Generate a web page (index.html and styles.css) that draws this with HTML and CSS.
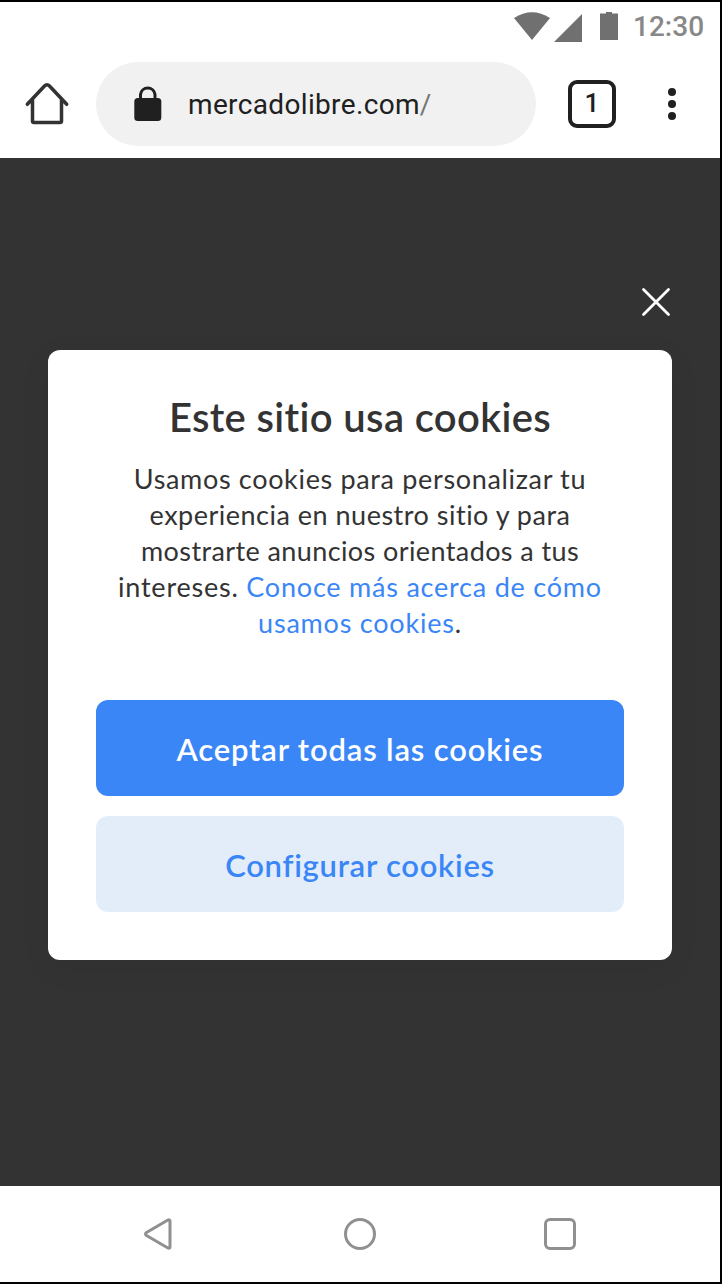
FILE: index.html
```html
<!DOCTYPE html>
<html lang="es">
<head>
<meta charset="utf-8">
<title>Mercado Libre</title>
<link rel="stylesheet" href="styles.css">
</head>
<body>
<div class="screen">
  <header class="status">
    <svg class="status-icons" width="106" height="34" viewBox="514 10 106 34" fill="#707070">
      <path d="M514 18Q532 6.500 550 18L532 40Z"/>
      <path d="M582 14V42H554Z"/>
      <path d="M600 13.500H606V12H612V13.500H618V40H600Z"/>
    </svg>
    <span class="clock">12:30</span>
  </header>
  <nav class="toolbar">
    <svg class="home" width="48" height="48" viewBox="24 80 48 48" fill="none" stroke="#333" stroke-width="3.500" stroke-linecap="round" stroke-linejoin="round">
      <path d="M27.300 104.300L44.500 86Q47 83.300 49.500 86L66.700 104.300M32.500 99.500V121Q32.500 122.500 34 122.500H60Q61.500 122.500 61.500 121V99.500"/>
    </svg>
    <div class="address">
      <svg class="lock" width="28" height="38" viewBox="134 85 28 38">
        <path d="M140.500 100V94.500A7.300 7.300 0 0 1 155 94.500V100" fill="none" stroke="#202020" stroke-width="3"/>
        <rect x="134.300" y="98" width="27" height="23" rx="3.500" fill="#202020"/>
      </svg>
      <span class="url">mercadolibre.com<span class="slash">/</span></span>
    </div>
    <div class="tabs">1</div>
    <div class="menu"><i></i><i></i><i></i></div>
  </nav>
  <main class="overlay">
    <svg class="close" width="32" height="32" viewBox="0 0 32 32" stroke="#fff" stroke-width="2.800" stroke-linecap="round"><path d="M3.500 3.500L28.500 28.500M28.500 3.500L3.500 28.500"/></svg>
    <section class="dialog">
      <h1>Este sitio usa cookies</h1>
      <p>
        <span class="l1">Usamos cookies para personalizar tu</span><br>
        <span class="l2">experiencia en nuestro sitio y para</span><br>
        <span class="l3">mostrarte anuncios orientados a tus</span><br>
        <span class="l4">intereses. <a>Conoce más acerca de cómo</a></span><br>
        <span class="l5"><a>usamos cookies</a>.</span>
      </p>
      <div class="button primary">Aceptar todas las cookies</div>
      <div class="button secondary">Configurar cookies</div>
    </section>
  </main>
  <footer class="system">
    <svg width="32" height="36" viewBox="142 1216 32 36" fill="none" stroke="#909090" stroke-width="3" stroke-linejoin="round"><path d="M146.500 1232.500L167.500 1220.300Q170 1219 170 1221V1247Q170 1249 167.500 1247.700L146.500 1235.500Q144.500 1234 146.500 1232.500Z"/></svg>
    <div class="circle"></div>
    <div class="square"></div>
  </footer>
</div>
</body>
</html>
```
FILE: styles.css
```css
* { box-sizing: border-box; }
body { margin: 0; background: #000; padding: 2px 2px 2px 0; }
.screen { width: 720px; height: 1280px; display: flex; flex-direction: column; background: #fff; font-family: Lato, sans-serif; font-variant-ligatures: none; }
.status { height: 46px; display: flex; padding: 8px 0 0 514px; }
.clock { font: 500 28px/34px Roboto, sans-serif; color: #888; margin-left: 13px; }
.toolbar { height: 110px; display: flex; align-items: center; padding: 2px 0 0 24px; }
.toolbar > * { flex: none; }
.address { margin: 0 32px 0 24px; width: 440px; height: 84px; border-radius: 42px; background: #f1f1f1; display: flex; align-items: center; padding-left: 38px; }
.url { margin-left: 26px; padding-top: 2px; font: 400 28px/40px Roboto, sans-serif; letter-spacing: .35px; color: #202020; }
.slash { color: #777; }
.tabs { width: 48px; height: 48px; border: 4px solid #202020; border-radius: 9px; font: 500 26px/39px Roboto, sans-serif; text-align: center; color: #202020; }
.menu { margin-left: 52px; display: grid; gap: 4px; }
.menu i { width: 8px; height: 8px; border-radius: 50%; background: #202020; }
.overlay { height: 1028px; background: #333; }
.close { display: block; margin: 128px 0 0 640px; }
.dialog { margin: 32px 48px 0; height: 610px; padding: 43px 48px 48px; border-radius: 12px; background: #fff; box-shadow: 0 8px 32px rgba(0,0,0,.06); text-align: center; color: #333; white-space: nowrap; }
h1 { margin: 0; font-size: 40px; line-height: 48px; font-weight: 600; letter-spacing: .35px; }
p { margin: 20px -20px 59px; font-size: 27px; line-height: 36px; }
.l1 { letter-spacing: .66px; }
.l2 { letter-spacing: .5px; }
.l3 { letter-spacing: .4px; }
.l4 { letter-spacing: .78px; }
.l5 { letter-spacing: .78px; }
a { color: #3a86f7; }
.button { height: 96px; border-radius: 12px; font-size: 31px; line-height: 98px; font-weight: 600; letter-spacing: .83px; }
.primary { background: #3a86f7; color: #fff; }
.secondary { margin-top: 20px; background: #e3edfa; color: #3a86f7; letter-spacing: .73px; }
.system { height: 96px; display: flex; align-items: center; padding-left: 142px; }
.circle { width: 32px; height: 32px; border: 3px solid #909090; border-radius: 50%; margin: 0 168px 0 170px; }
.square { width: 32px; height: 32px; border: 3px solid #909090; border-radius: 6px; }
```
